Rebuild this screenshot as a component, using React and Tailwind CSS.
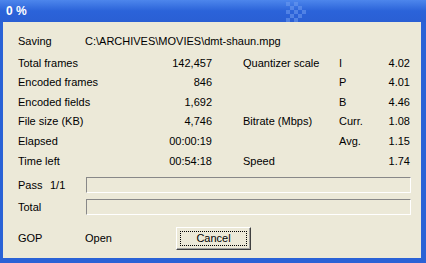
import React from "react";

const Row = ({ l, v, l2, k, v2 }) => (
  <div className="flex h-[19.6px] items-center whitespace-nowrap">
    <div className="w-[67px] whitespace-nowrap">{l}</div>
    <div className="w-[127px] text-right">{v}</div>
    <div className="w-[31px]" />
    <div className="w-[96px] whitespace-nowrap">{l2}</div>
    <div className="w-[40px]">{k}</div>
    <div className="w-[31px] text-right">{v2}</div>
  </div>
);

const Bar = () => (
  <div className="h-[16px] flex-1 border-t border-l border-t-[#888] border-l-[#888] border-b border-r border-b-white border-r-white bg-[#ece9d8]" />
);

export default function App() {
  return (
    <div
      className="w-[426px] h-[263px] bg-[#2a62d6] flex flex-col overflow-hidden text-[11px] text-black"
      style={{ fontFamily: '"Liberation Sans", Arial, sans-serif' }}
    >
      <div className="relative h-[22px] shrink-0 bg-gradient-to-b from-[#4d86ec] via-[#2b63d9] to-[#2a5fd4] flex items-center pl-[6px]">
        <span className="text-white font-bold text-[12px]">0 %</span>
        <svg className="absolute left-[256px] top-0" width="70" height="22" viewBox="0 0 70 22">
          <g fill="#6f9cf0" opacity="0.55">
            <rect x="30" y="2" width="4" height="4" />
            <rect x="38" y="2" width="4" height="4" />
            <rect x="34" y="6" width="4" height="4" />
            <rect x="42" y="6" width="4" height="4" />
            <rect x="30" y="10" width="4" height="4" />
            <rect x="38" y="10" width="4" height="4" />
            <rect x="46" y="10" width="4" height="4" />
            <rect x="34" y="14" width="4" height="4" />
            <rect x="42" y="14" width="4" height="4" />
            <rect x="30" y="18" width="4" height="4" />
            <rect x="38" y="18" width="4" height="4" />
          </g>
        </svg>
      </div>
      <div className="flex-1 ml-[3px] mr-[5px] mb-[5px] bg-[#ece9d8] pl-[15px] pt-[9px]">
        <div className="flex h-[20px] items-center whitespace-nowrap">
          <div className="w-[67px]">Saving</div>
          <div>C:\ARCHIVES\MOVIES\dmt-shaun.mpg</div>
        </div>
        <div className="h-[2px]" />
        <Row l="Total frames" v="142,457" l2="Quantizer scale" k="I" v2="4.02" />
        <Row l="Encoded frames" v="846" l2="" k="P" v2="4.01" />
        <Row l="Encoded fields" v="1,692" l2="" k="B" v2="4.46" />
        <Row l="File size (KB)" v="4,746" l2="Bitrate (Mbps)" k="Curr." v2="1.08" />
        <Row l="Elapsed" v="00:00:19" l2="" k="Avg." v2="1.15" />
        <Row l="Time left" v="00:54:18" l2="Speed" k="" v2="1.74" />
        <div className="flex items-center mt-[6px] pr-[10px]">
          <div className="w-[68px] flex">
            <span className="w-[32px]">Pass</span>
            <span>1/1</span>
          </div>
          <Bar />
        </div>
        <div className="flex items-center mt-[6px] pr-[10px]">
          <div className="w-[68px]">Total</div>
          <Bar />
        </div>
        <div className="flex items-center mt-[11px]">
          <div className="w-[67px]">GOP</div>
          <div className="w-[91px]">Open</div>
          <div className="w-[75px] h-[23px] border border-t-white border-l-white border-b-[#404040] border-r-[#404040] shadow-[inset_-1px_-1px_0_#a0a0a0] p-[3px]">
            <div className="h-full w-full border border-dotted border-black flex items-center justify-center">
              Cancel
            </div>
          </div>
        </div>
      </div>
    </div>
  );
}
